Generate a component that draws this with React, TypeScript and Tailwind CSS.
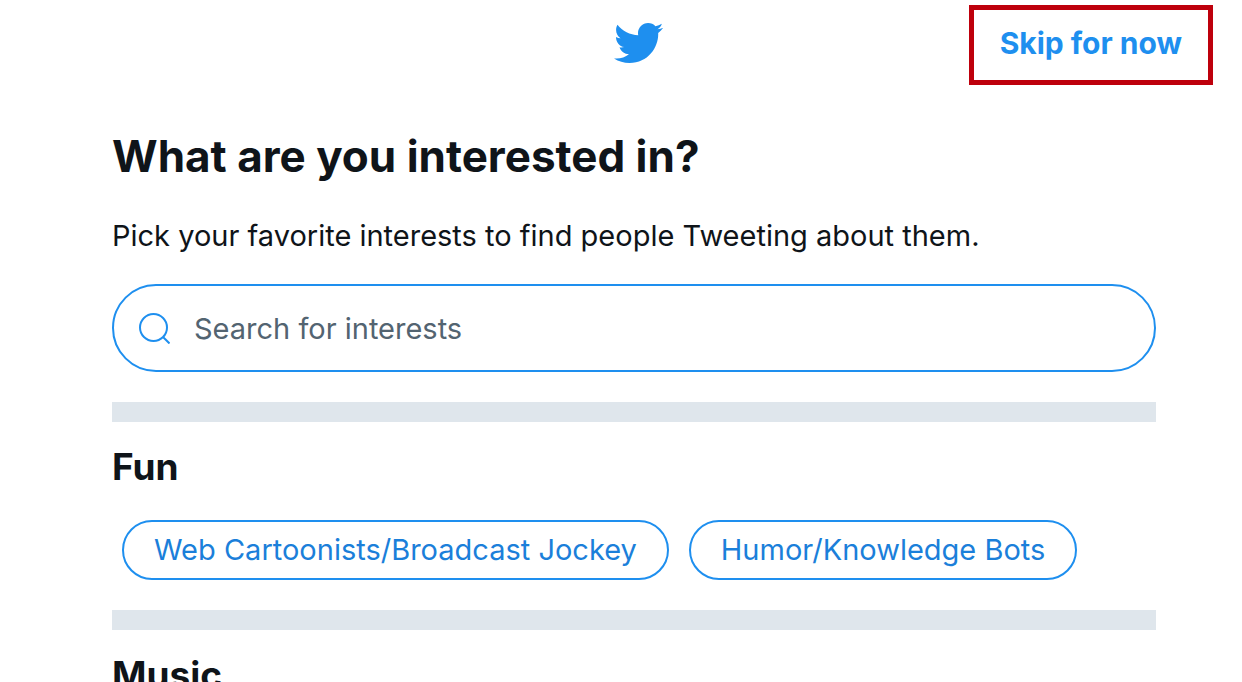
import * as React from "react";
import { useState } from 'react';

const sections = [
    {
        title: 'Fun',
        topics: ['Web Cartoonists/Broadcast Jockey', 'Humor/Knowledge Bots'],
    },
    {
        title: 'Music',
        topics: [],
    },
];

function BirdLogo() {
    return (
        <svg viewBox="0 0 24 24" className="size-[52px] fill-[#1e8fef]" role="img" aria-label="Twitter">
            <path d="M23.643 4.937c-.835.37-1.732.62-2.675.733.962-.576 1.7-1.49 2.048-2.578-.9.534-1.897.922-2.958 1.13-.85-.904-2.06-1.47-3.4-1.47-2.572 0-4.658 2.086-4.658 4.66 0 .364.042.718.12 1.06-3.873-.195-7.304-2.05-9.602-4.868-.4.69-.63 1.49-.63 2.342 0 1.616.823 3.043 2.072 3.878-.764-.025-1.482-.234-2.11-.583v.06c0 2.257 1.605 4.14 3.737 4.568-.392.106-.803.162-1.227.162-.3 0-.593-.028-.877-.082.593 1.85 2.313 3.198 4.352 3.234-1.595 1.25-3.604 1.995-5.786 1.995-.376 0-.747-.022-1.112-.065 2.062 1.323 4.51 2.093 7.14 2.093 8.57 0 13.255-7.098 13.255-13.254 0-.2-.005-.402-.014-.602.91-.658 1.7-1.477 2.323-2.41z" />
        </svg>
    );
}

function SearchIcon() {
    return (
        <svg viewBox="0 0 32 32" className="size-8 shrink-0 fill-none stroke-[#1e8fef] stroke-2" aria-hidden="true">
            <circle cx="15.5" cy="15.5" r="13.5" />
            <path d="M25 25L31.5 31.5" />
        </svg>
    );
}

export default function App() {
    const [search, setSearch] = useState('');
    const [selected, setSelected] = useState<string[]>([]);

    const toggleTopic = (topic: string) => {
        if (selected.includes(topic)) {
            setSelected(selected.filter((item) => item !== topic));
        } else {
            setSelected([...selected, topic]);
        }
    };

    return (
        <div className="h-screen overflow-hidden bg-white font-['Inter','Liberation_Sans',sans-serif] text-[#0f1419]">
            <header className="grid grid-cols-[1fr_auto_1fr] items-start pt-[5px] pr-[29px] pl-[63px]">
                <div />
                <div className="pt-3">
                    <BirdLogo />
                </div>
                <button
                    type="button"
                    className="justify-self-end border-[5px] border-[#be000c] px-[26px] pt-[15px] pb-[19px] text-[30px] leading-9 font-bold text-[#1e8fef]"
                >
                    Skip for now
                </button>
            </header>

            <main className="pt-[43px] pr-[86px] pl-[112px]">
                <h1 className="text-[44px] leading-[56px] font-bold">What are you interested in?</h1>
                <p className="mt-8 text-[29px] leading-10">Pick your favorite interests to find people Tweeting about them.</p>

                <label className="mt-7 flex h-[88px] items-center gap-6 rounded-full border-2 border-[#1e8fef] px-6">
                    <SearchIcon />
                    <input
                        type="text"
                        aria-label="Search for interests"
                        placeholder="Search for interests"
                        value={search}
                        onChange={(e) => setSearch(e.target.value)}
                        className="min-w-0 flex-1 pt-0.5 text-[29px] leading-10 outline-none placeholder:text-[#536471]"
                    />
                </label>

                {sections.map((section) => (
                    <section key={section.title} className="mt-[30px] border-t-[20px] border-[#dfe6ec] pt-5">
                        <h2 className="text-[37px] leading-[50px] font-bold">{section.title}</h2>
                        <div className="mt-7 flex flex-wrap gap-5 px-[10px]">
                            {section.topics.map((topic) => (
                                <button
                                    key={topic}
                                    type="button"
                                    aria-pressed={selected.includes(topic)}
                                    onClick={() => toggleTopic(topic)}
                                    className="h-[60px] rounded-full border-2 border-[#1e8fef] px-[30px] text-[29px] leading-10 text-[#1b7fda] aria-pressed:bg-[#1e8fef] aria-pressed:text-white"
                                >
                                    {topic}
                                </button>
                            ))}
                        </div>
                    </section>
                ))}
            </main>
        </div>
    );
}
